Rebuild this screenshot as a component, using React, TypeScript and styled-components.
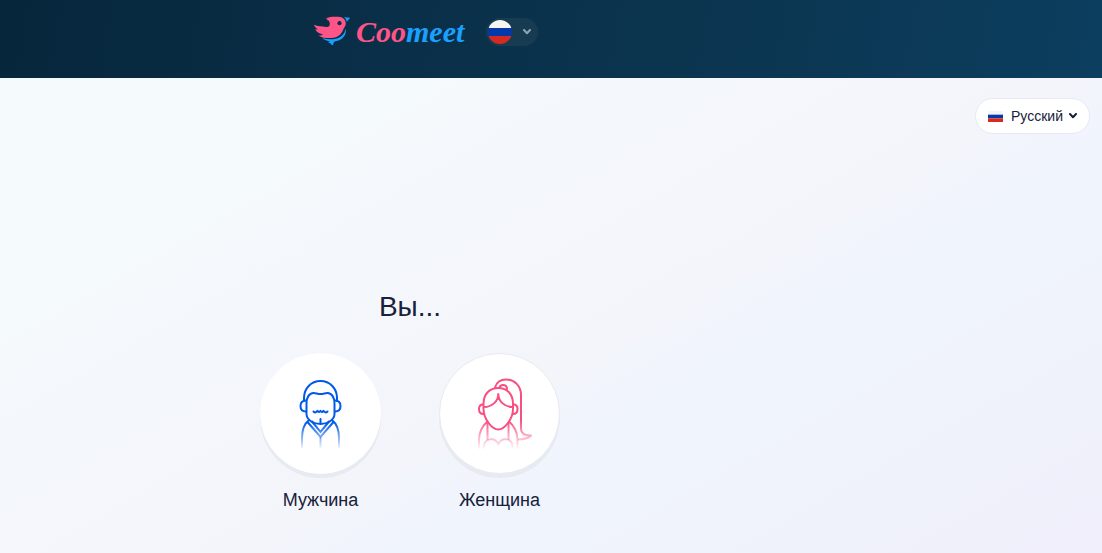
import React, { useState } from "react";
import styled, { createGlobalStyle } from "styled-components";

const GlobalStyle = createGlobalStyle`
  *, *::before, *::after { box-sizing: border-box; }
  body {
    margin: 0;
    color: #17213a;
    font-family: "Liberation Sans", Arial, sans-serif;
  }
  button, select { font: inherit; color: inherit; cursor: pointer; }
`;

const Page = styled.div`
  display: flex;
  flex-direction: column;
  min-height: 100vh;
`;

const Header = styled.header`
  display: grid;
  grid-template-columns: 1fr 282px;
  height: 78px;
  background: linear-gradient(100deg, #06263b 0%, #0a2f48 35%, #0b3550 65%, #0c3e5f 100%);
`;

const Brand = styled.div`
  display: flex;
  justify-content: center;
  align-items: center;
  gap: 20px;
  height: 64px;
  padding-left: 30px;
`;

const Logo = styled.a`
  display: flex;
  align-items: center;
  gap: 4px;
  text-decoration: none;
`;

const Wordmark = styled.span`
  width: 110px;
  font: italic bold 30px/36px "Liberation Serif", serif;
  color: #ff5487;
`;

const WordmarkTail = styled.span`
  color: #1aa0ff;
`;

const FlagButton = styled.button`
  display: flex;
  align-items: center;
  gap: 11px;
  height: 28px;
  width: 52px;
  padding: 0 0 0 2px;
  border: 0;
  border-radius: 14px;
  background: #173b51;
  color: #8fa3b8;
`;

const Main = styled.main`
  display: flex;
  flex-direction: column;
  flex: 1;
  padding: 20px 12px 40px 0;
  background: linear-gradient(150deg, #f5fafd 0%, #f5fafd 20%, #f4f6fb 45%, #f3f5fb 56%, #f0f4fd 64%, #eff2fb 84%, #f0eefb 100%);
`;

const Language = styled.label`
  display: flex;
  align-items: center;
  align-self: flex-end;
  width: 115px;
  height: 36px;
  padding: 0 12px;
  border: 1px solid #e7eaf3;
  border-radius: 18px;
  background: #fff;
`;

const LanguageSelect = styled.select`
  flex: 1;
  min-width: 0;
  margin-left: 8px;
  padding: 0;
  border: 0;
  background: none;
  appearance: none;
  font-size: 14px;
  line-height: 20px;
`;

const Chooser = styled.section`
  display: flex;
  flex-direction: column;
  align-items: center;
  margin: auto 270px 0 0;
`;

const Title = styled.h1`
  margin: 0 0 30px;
  font-size: 28px;
  line-height: 32px;
  font-weight: 400;
`;

const Choices = styled.div`
  display: flex;
  gap: 58px;
`;

const Choice = styled.button`
  display: flex;
  flex-direction: column;
  align-items: center;
  gap: 13px;
  width: 121px;
  padding: 0;
  border: 0;
  background: none;
  font-size: 18px;
  line-height: 26px;
`;

const Disc = styled.span<{ $active: boolean }>`
  display: flex;
  align-items: center;
  justify-content: center;
  width: 121px;
  height: 121px;
  border: 1px solid ${(p) => (p.$active ? "#fff" : "#e7eaf1")};
  border-radius: 50%;
  background: #fff;
  box-shadow: 0 4px 0 #e7eaf1;
`;

function Bird() {
  return (
    <svg width="40" height="36" viewBox="0 2 40 36" overflow="visible" aria-hidden="true">
      <path
        fill="#ff5487"
        d="M13.800 6.800c2-1.400 5.200-2 8.200-2h4.200c4.700 0 7.600 3 7.600 6.600 0 2.600-1.900 4.100-2.700 6.400-1.700 4.900-5.600 7.900-11.100 8.200-4.600.3-9.800.1-13.600-2.600 1.900.1 3.500-.2 4.600-1C7.700 21.900 4.600 20.100 3.200 17.200l3 .3C4 16.200 2.400 14.500 2 12.700c3.600 1.500 8 1.500 12 2.200 2.400.4 3.700-.8 3.800-2.600.1-1.700-.4-3-1.300-3.900l-2-.5 1.300-.9z"
      />
      <circle cx="27.500" cy="11.200" r="2.100" fill="#0a2f48" />
      <path fill="#1aa0ff" d="M32 5.200l6.200.5-3.500 4.100c-.3-2-1-3.500-2.700-4.600z" />
      <path
        fill="#1aa0ff"
        d="M33.600 16.500c1.400 5.600-2.800 11.700-9.400 12.500-2.200.4-3 1.300-3.100 4.300-1.400-.3-2.300-1-2.700-2l-2.200-.8 1.600-1.300c-2.400-.3-5.300-1.200-7.600-3 4.500 1 8.600 1.300 12.300.7 6.200-1 10.300-4.500 11.100-10.400z"
      />
    </svg>
  );
}

function Flag({ round = false }: { round?: boolean }) {
  const size = round ? 24 : 15;
  const height = round ? 24 : 11;
  return (
    <svg
      width={size}
      height={height}
      viewBox="0 0 24 24"
      preserveAspectRatio="none"
      aria-hidden="true"
    >
      <defs>
        <clipPath id="flag-disc">
          <circle cx="12" cy="12" r="12" />
        </clipPath>
      </defs>
      <g clipPath={round ? "url(#flag-disc)" : undefined}>
        <path fill="#f4f4f4" d="M0 0h24v8H0z" />
        <path fill="#0538a8" d="M0 8h24v8H0z" />
        <path fill="#d62a20" d="M0 16h24v8H0z" />
      </g>
    </svg>
  );
}

function Chevron() {
  return (
    <svg width="8" height="6" viewBox="0 0 8 6" aria-hidden="true">
      <path
        d="M1 1l3 3.200L7 1"
        fill="none"
        stroke="currentColor"
        strokeWidth="2"
        strokeLinecap="round"
        strokeLinejoin="round"
      />
    </svg>
  );
}

function Man() {
  return (
    <svg width="60" height="76" viewBox="291 376 60 76" aria-hidden="true">
      <defs>
        <linearGradient id="man-fade" gradientUnits="userSpaceOnUse" x1="0" y1="423" x2="0" y2="450">
          <stop offset="0" stopColor="#0059e8" />
          <stop offset="1" stopColor="#0059e8" stopOpacity="0" />
        </linearGradient>
      </defs>
      <g fill="none" stroke="#0059e8" strokeWidth="2" strokeLinecap="round" strokeLinejoin="round">
        <path d="M304 401v-3c0-9.500 7-17 16.500-17s16.500 7.500 16.500 17v3" />
        <path d="M306.500 414v-11c0-5 2.500-10 7-10 2.500 0 4 1 7 1s4.500-1 7-1c4.500 0 7 5 7 10v11c0 6-7 10-14 10s-14-4-14-10z" />
        <path d="M306 400.500c-3.500 0-5.500 2-5.500 5.500s2 5.500 5.500 5.500M335 400.500c3.500 0 5.500 2 5.500 5.500s-2 5.500-5.500 5.500" />
        <path d="M313.500 411.500c1.500 1.500 3 1 4-.7 1.200 1.500 2 1.500 3 0 1 1.500 1.800 1.500 3 0 1 1.700 2.500 2.200 4 .7" />
        <path d="M320.500 419v4.500" />
      </g>
      <g fill="none" stroke="url(#man-fade)" strokeWidth="2">
        <path d="M309 420c-5 4-7 10-7 18v10M332 420c5 4 7 10 7 18v10" />
        <path d="M307.500 422l13 15 13-15M311.500 421l9 11 9-11" />
        <path d="M320.500 437l.01 11" />
      </g>
    </svg>
  );
}

function Woman() {
  return (
    <svg width="60" height="76" viewBox="470 376 60 76" overflow="visible" aria-hidden="true">
      <defs>
        <linearGradient id="woman-fade" gradientUnits="userSpaceOnUse" x1="0" y1="420" x2="0" y2="450">
          <stop offset="0" stopColor="#f94e80" />
          <stop offset="1" stopColor="#f94e80" stopOpacity="0" />
        </linearGradient>
      </defs>
      <g fill="none" stroke="#f94e80" strokeWidth="2" strokeLinecap="round" strokeLinejoin="round">
        <path d="M483.500 404c0-10 6-16 14.800-16s14.700 6 14.700 16v5c0 10-8.500 20.500-14.700 20.500s-14.800-10.500-14.800-20.500z" />
        <path d="M498.300 394c0 7-6 13-14.300 13M498.300 394c0 7 6 13 14.300 13" />
        <path d="M483 404.500c-2.500 0-4 1.500-4 4.500s1.500 5 4.500 5M513.500 404.500c2.500 0 4 1.500 4 4.500s-1.500 5-4.500 5" />
        <path d="M495 387.500c1.500-5 5.500-8 11-8 8.500 0 15 6.500 15 15.500v20" />
        <path d="M499.500 387.500c1-3.500 7.500-3.500 7.500 1.500" />
      </g>
      <g fill="none" stroke="url(#woman-fade)" strokeWidth="2" strokeLinejoin="round">
        <path d="M521 414v15c0 4 3.500 6.500 10 6.500-3 3-7 4-13 4" />
        <path d="M488 421c-6 5-9 11-9 19v9M508.500 421c6 5 9 11 9 19v9" />
        <path d="M487.500 422v18M508.500 422v18" />
        <path d="M484 449v-2c0-9 11-10.500 14.300-2.500 3.300-8 14.300-6.500 14.300 2.500v2" />
      </g>
    </svg>
  );
}

const options = [
  { id: "man", label: "Мужчина", Icon: Man },
  { id: "woman", label: "Женщина", Icon: Woman },
];

export default function App() {
  const [active, setActive] = useState("man");
  return (
    <Page>
      <GlobalStyle />
      <Header>
        <Brand>
          <Logo href="#" aria-label="Coomeet">
            <Bird />
            <Wordmark>
              Coo<WordmarkTail>meet</WordmarkTail>
            </Wordmark>
          </Logo>
          <FlagButton type="button" aria-label="Русский" aria-haspopup="listbox">
            <Flag round />
            <Chevron />
          </FlagButton>
        </Brand>
      </Header>
      <Main>
        <Language>
          <Flag />
          <LanguageSelect aria-label="Язык">
            <option>Русский</option>
          </LanguageSelect>
          <Chevron />
        </Language>
        <Chooser>
          <Title>Вы...</Title>
          <Choices>
            {options.map(({ id, label, Icon }) => (
              <Choice key={id} type="button" aria-pressed={active === id} onClick={() => setActive(id)}>
                <Disc $active={active === id}>
                  <Icon />
                </Disc>
                {label}
              </Choice>
            ))}
          </Choices>
        </Chooser>
      </Main>
    </Page>
  );
}
